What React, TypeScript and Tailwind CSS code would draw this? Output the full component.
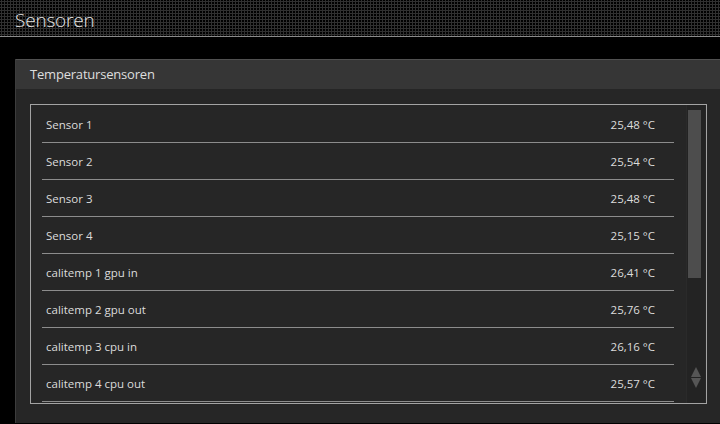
const SENSORS = [
  { name: "Sensor 1", value: "25,48 °C" },
  { name: "Sensor 2", value: "25,54 °C" },
  { name: "Sensor 3", value: "25,48 °C" },
  { name: "Sensor 4", value: "25,15 °C" },
  { name: "calitemp 1 gpu in", value: "26,41 °C" },
  { name: "calitemp 2 gpu out", value: "25,76 °C" },
  { name: "calitemp 3 cpu in", value: "26,16 °C" },
  { name: "calitemp 4 cpu out", value: "25,57 °C" },
];

export default function App() {
  return (
    <div
      className="h-[424px] w-[720px] overflow-hidden bg-black text-[#dcdcdc]"
      style={{ fontFamily: '"Open Sans", "Noto Sans", sans-serif' }}
    >
      <header className="h-[37px] border-b border-[#8a8a8a] bg-black bg-[radial-gradient(#303030_1px,transparent_1.1px)] bg-[length:3px_3px] pl-[15px] pt-[8px]">
        <h1 className="text-[19px] leading-[24px] font-light tracking-[-0.2px] text-[#e6e6e6]">Sensoren</h1>
      </header>

      <section className="ml-[15px] mt-[22px] border-l border-[#3c3c3c]">
        <div className="flex h-[30px] items-center border-t border-[#505050] bg-[#363636] pl-[14px]">
          <h2 className="text-[13px] tracking-[-0.2px] text-[#dedede]">Temperatursensoren</h2>
        </div>
        <div className="h-[334px] bg-[#262626] pb-[19px] pl-[14px] pt-[15px]">
          <div className="flex h-[300px] w-[677px] border border-[#a3a3a3]">
            <ul className="ml-[11px] w-[632px] overflow-hidden pt-[1px]">
              {SENSORS.map((s) => (
                <li
                  key={s.name}
                  className="flex h-[37px] items-center justify-between border-b border-[#8c8c8c] pl-[4px] pr-[19px] pt-[2px] text-[11.5px]"
                >
                  <span>{s.name}</span>
                  <span>{s.value}</span>
                </li>
              ))}
            </ul>
            <div className="ml-[12px] flex w-[19px] flex-col border-l border-[#2a2a2a] bg-[#232323] pt-[5px]">
              <div className="ml-[1px] h-[168px] w-[13px] bg-[#4d4d4d]" />
              <div className="mt-auto mb-[15px] flex flex-col items-center gap-[1px]">
                <svg width="10" height="10" viewBox="0 0 10 10">
                  <path d="M5 0 L10 10 L0 10 Z" fill="#565656" />
                </svg>
                <svg width="10" height="10" viewBox="0 0 10 10">
                  <path d="M0 0 L10 0 L5 10 Z" fill="#565656" />
                </svg>
              </div>
            </div>
          </div>
        </div>
      </section>
    </div>
  );
}
